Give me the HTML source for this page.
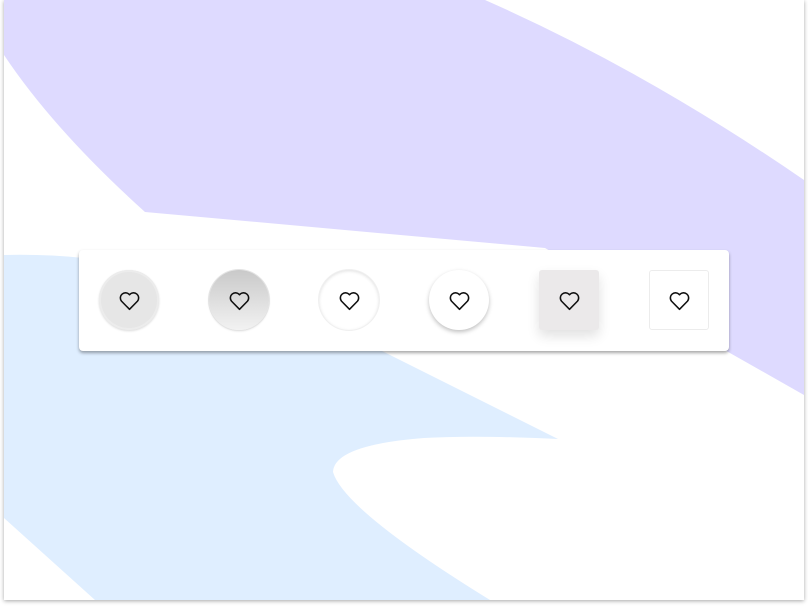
<!DOCTYPE html>
<html><head><style>
html,body{margin:0;padding:0;background:#fff;width:808px;height:608px;overflow:hidden}
.frame{position:absolute;left:4px;top:0;width:800px;height:600px;background:#fff;box-shadow:0 1px 4px rgba(0,0,0,.35);overflow:hidden}
.card{position:absolute;left:79px;top:250px;width:650px;height:101px;background:#fff;border-radius:4px;box-shadow:0 2px 3px rgba(0,0,0,.35)}
.b{position:absolute;top:20px;width:60px;height:60px;box-sizing:border-box;display:flex;align-items:center;justify-content:center}
.b svg{width:25px;height:25px}
</style></head><body>
<div class="frame">
<svg width="800" height="600" style="position:absolute;left:0;top:0">
<path d="M0,0 L481,0 Q640,70 800,180 L800,395 L541,248 L141,212 Q50,130 0,55 Z" fill="#dedaff"/>
<path d="M0,255 Q40,254 80,258 L80,350 L376,350 L554,439 Q470,435 420,438 Q330,445 329,472 Q340,510 486,600 L91,600 L0,518 Z" fill="#dfeeff"/>
</svg>
</div>
<div class="card">
<div class="b" style="left:20px;border-radius:50%;background:#e6e6e6;box-shadow:inset 0 0 0 2px #ececec,0 1px 2px rgba(0,0,0,.15)"><svg viewBox="0 0 24 24"><path d="M12 20.5 L4.3 12.6 A4.6 4.6 0 0 1 12 6.5 A4.6 4.6 0 0 1 19.7 12.6 Z" fill="none" stroke="#111" stroke-width="1.5" stroke-linejoin="round"/></svg></div>
<div class="b" style="left:130px;border-radius:50%;background:linear-gradient(#c9c9c9,#f2f2f2);box-shadow:0 0 0 1px #e3e3e3,0 1px 2px rgba(0,0,0,.15)"><svg viewBox="0 0 24 24"><path d="M12 20.5 L4.3 12.6 A4.6 4.6 0 0 1 12 6.5 A4.6 4.6 0 0 1 19.7 12.6 Z" fill="none" stroke="#111" stroke-width="1.5" stroke-linejoin="round"/></svg></div>
<div class="b" style="left:240px;border-radius:50%;background:#fff;box-shadow:inset 0 1px 3px rgba(0,0,0,.12),0 0 0 1px #f0f0f0"><svg viewBox="0 0 24 24"><path d="M12 20.5 L4.3 12.6 A4.6 4.6 0 0 1 12 6.5 A4.6 4.6 0 0 1 19.7 12.6 Z" fill="none" stroke="#111" stroke-width="1.5" stroke-linejoin="round"/></svg></div>
<div class="b" style="left:350px;border-radius:50%;background:#fff;box-shadow:0 2px 4px rgba(0,0,0,.25)"><svg viewBox="0 0 24 24"><path d="M12 20.5 L4.3 12.6 A4.6 4.6 0 0 1 12 6.5 A4.6 4.6 0 0 1 19.7 12.6 Z" fill="none" stroke="#111" stroke-width="1.5" stroke-linejoin="round"/></svg></div>
<div class="b" style="left:460px;border-radius:3px;background:#ebe9ea;box-shadow:0 6px 12px rgba(0,0,0,.12)"><svg viewBox="0 0 24 24"><path d="M12 20.5 L4.3 12.6 A4.6 4.6 0 0 1 12 6.5 A4.6 4.6 0 0 1 19.7 12.6 Z" fill="none" stroke="#111" stroke-width="1.5" stroke-linejoin="round"/></svg></div>
<div class="b" style="left:570px;border-radius:3px;background:#fff;border:1px solid #ececec"><svg viewBox="0 0 24 24"><path d="M12 20.5 L4.3 12.6 A4.6 4.6 0 0 1 12 6.5 A4.6 4.6 0 0 1 19.7 12.6 Z" fill="none" stroke="#111" stroke-width="1.5" stroke-linejoin="round"/></svg></div>
</div>
</body></html>
